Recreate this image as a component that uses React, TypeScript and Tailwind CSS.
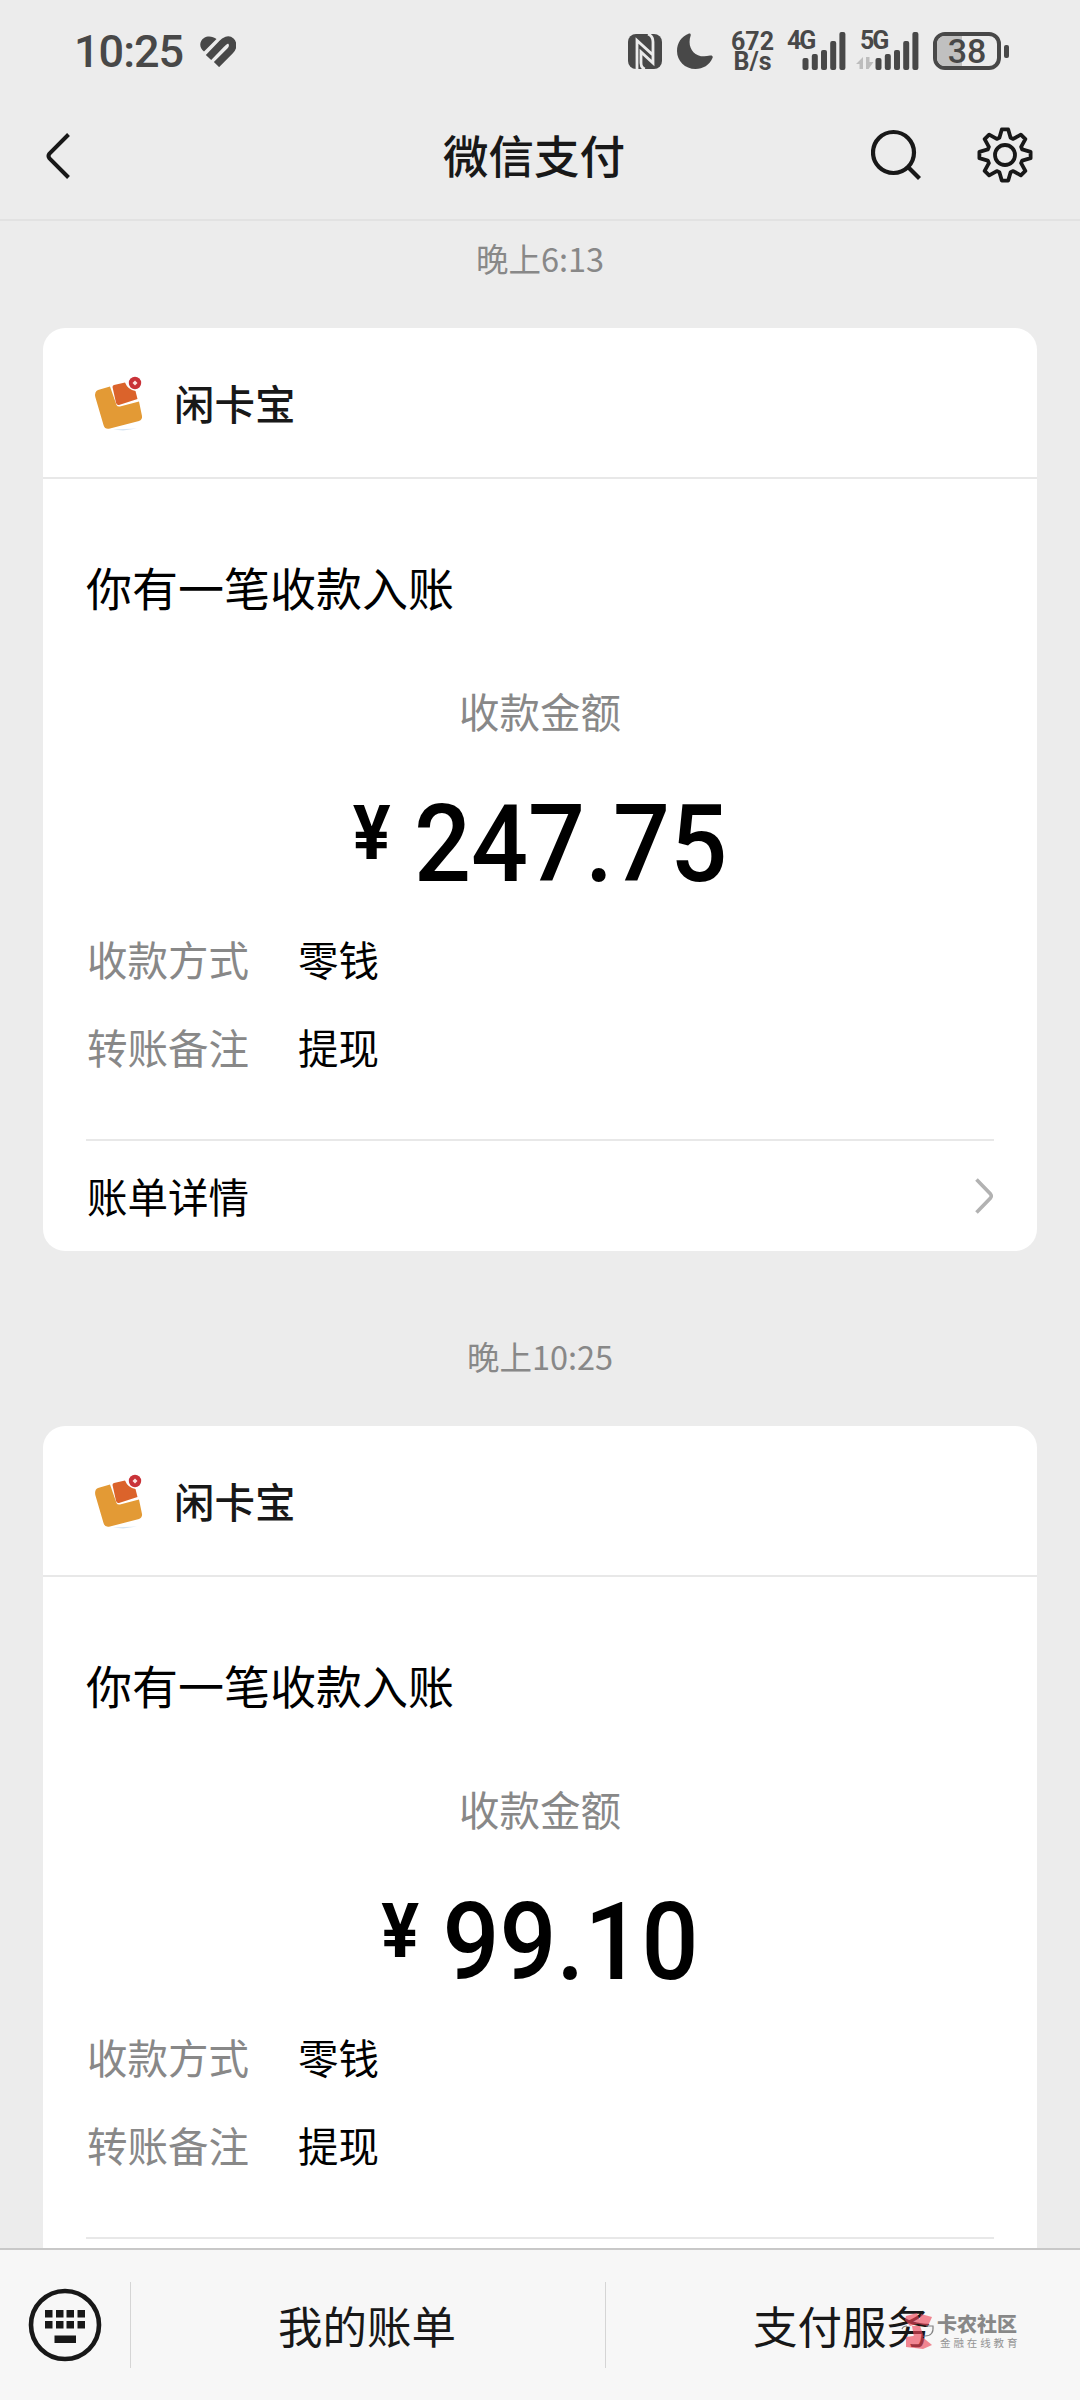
import { FC } from 'react';

interface Payment {
  time: string;
  amount: string;
}

const payments: Payment[] = [
  { time: '晚上6:13', amount: '247.75' },
  { time: '晚上10:25', amount: '99.10' },
];

const details = [
  { label: '收款方式', value: '零钱' },
  { label: '转账备注', value: '提现' },
];

// one tooth (base, tip, tip, base), repeated eight times around the centre
const TOOTH = [
  [-5.6, -17.2],
  [-3.2, -25.6],
  [3.2, -25.6],
  [5.6, -17.2],
];

const gearPoints = Array.from({ length: 8 }, (_, i) => {
  const a = (i * Math.PI) / 4;
  return TOOTH.map(([x, y]) => {
    const px = 28 + x * Math.cos(a) - y * Math.sin(a);
    const py = 28 + x * Math.sin(a) + y * Math.cos(a);
    return `${px.toFixed(2)},${py.toFixed(2)}`;
  }).join(' ');
}).join(' ');

const Signal: FC<{ label: string; data?: boolean }> = ({ label, data }) => (
  <div className="relative h-[38px] w-[62px]">
    <span className="absolute left-0 top-[-2px] text-[25px] font-bold leading-[22px] tracking-[-2px]">{label}</span>
    <svg viewBox="0 0 62 38" className="absolute inset-0 h-full w-full overflow-visible">
      <g fill="#484848">
        <rect x="15.5" y="26" width="6" height="12" rx="2" />
        <rect x="24.8" y="22" width="6" height="16" rx="2" />
        <rect x="34" y="18" width="6" height="20" rx="2" />
        <rect x="43.2" y="9" width="6" height="29" rx="2" />
        <rect x="52.4" y="0" width="6" height="38" rx="2" />
      </g>
      {data && <path d="M-4 32L3 25V37H-.5V32ZM6 25H9.5V30H13.5L8.5 37H6Z" fill="#bdbdbd" />}
    </svg>
  </div>
);

const StatusBar: FC = () => (
  <div className="flex h-[100px] items-center pl-[74px] pr-[71px] pt-[2px] font-['Roboto','Noto_Sans_CJK_SC',sans-serif] text-[#484848]">
    <span className="w-[126px] text-[45px] font-medium leading-none tracking-[-1px]">10:25</span>
    <svg viewBox="0 0 36 31" className="h-[31px] w-[36px]">
      <path d="M4 15.5C-1 12 -1 5 4 2C8 -.5 13 .5 16.5 3Z" fill="#484848" />
      <path d="M8.5 21.5L21.5 8C25 4 28.5 2.8 31 5.2C33.8 8.5 33 12 30 15L16.5 28.5" fill="none" stroke="#484848" strokeWidth="7.4" />
    </svg>
    <div className="ml-auto flex items-center">
      <svg viewBox="0 0 34 35" className="mr-[15px] h-[35px] w-[34px]">
        <rect width="34" height="35" rx="8" fill="#484848" />
        <path d="M9 35V6.5L25 21V8Q25 2 20 0M25 20V29L13 18V29Q13 34 17 35" fill="none" stroke="#ececec" strokeWidth="2.8" />
      </svg>
      <svg viewBox="0 0 36 36" className="mr-[18px] h-[36px] w-[36px]" fill="#484848">
        <path d="M11.5 .8C13 .2 14.2 1.2 13.6 2.8C9.5 15 18 26.5 33 22.5C35 22 36.3 23.2 35.5 25C32.5 32 26 36 18.5 36C8 36 0 28 0 18C0 10 4.500 3.5 11.5 .8Z" />
      </svg>
      <div className="mr-[13px] flex w-[43px] flex-col items-center pt-[1px] text-[25px] font-bold leading-[20px]">
        <span>672</span>
        <span>B/s</span>
      </div>
      <div className="mr-[11px]">
        <Signal label="4G" />
      </div>
      <div className="mr-[11px]">
        <Signal label="5G" data />
      </div>
      <div className="flex items-center">
        <div className="relative flex h-[38px] w-[68px] items-center justify-center overflow-hidden rounded-[12px] border-4 border-[#484848]">
          <div className="absolute inset-y-0 left-0 w-[25px] bg-[#c0c0c0]" />
          <span className="relative text-[34px] font-medium leading-[30px]">38</span>
        </div>
        <div className="ml-[3px] h-[13px] w-[5px] rounded-[2px] bg-[#484848]" />
      </div>
    </div>
  </div>
);

const NavBar: FC = () => (
  <header className="grid h-[121px] grid-cols-3 items-start border-b-2 border-[#e2e2e2] px-[43px] text-[#181818]">
    <svg viewBox="0 0 30 50" className="mt-[31px] h-[50px] w-[30px]" fill="none" stroke="#181818" strokeWidth="4">
      <path d="M25.5 3.5L6.5 22.5Q4.5 25 6.5 27.5L25.5 46.5" />
    </svg>
    <h1 className="mt-[24px] -translate-x-[6px] text-center text-[45.5px] font-medium leading-[60px]">微信支付</h1>
    <div className="flex items-start justify-end pr-[4px]">
      <svg viewBox="0 0 52 52" className="mr-[54px] mt-[29px] h-[52px] w-[52px]" fill="none" stroke="#181818" strokeWidth="4.2">
        <circle cx="22.5" cy="23.5" r="20.5" />
        <path d="M37 38L48.5 49.5" />
      </svg>
      <svg viewBox="0 0 56 56" className="mt-[27px] h-[56px] w-[56px]" fill="none" stroke="#181818" strokeWidth="3.8">
        <polygon points={gearPoints} strokeLinejoin="round" />
        <circle cx="28" cy="28" r="10" />
      </svg>
    </div>
  </header>
);

const MerchantLogo: FC = () => (
  <svg viewBox="0 0 52 58" className="h-[58px] w-[52px]">
    <path d="M20 55.5L44 54.5L30 56.5Z" fill="#d5e4f2" />
    <path
      d="M5 16L17 12.5L23.5 31Q24.5 33 27 32.5L46 27.5L49 42Q49.5 45.5 46 47L17 54.5Q12 56 10.5 51L2.3 23Q1.3 17.5 5 16Z"
      fill="#e39a35"
    />
    <path d="M19.5 13Q19.5 11.5 21 11L32 8.5Q35 16 42.5 17L44.5 25L26 31Q24 31.5 23 29Z" fill="#db632b" />
    <circle cx="42" cy="9" r="6.2" fill="#c93238" />
    <path d="M42 6.5L44.5 9L42 11.5L39.5 9Z" fill="#fbe3df" />
  </svg>
);

const PaymentCard: FC<{ amount: string }> = ({ amount }) => (
  <article className="mx-[43px] h-[923px] shrink-0 overflow-hidden rounded-[22px] bg-white text-[40.5px] leading-[60px] text-black">
    <div className="flex h-[151px] items-center border-b-2 border-[#e8e8e8] pl-[50px]">
      <MerchantLogo />
      <span className="ml-[29px] font-medium text-[#181818]">闲卡宝</span>
    </div>
    <div className="px-[43px]">
      <p className="pt-[74px] text-[46px] leading-[66px]">你有一笔收款入账</p>
      <p className="mt-[62px] text-center text-[#888888]">收款金额</p>
      <div className="mt-[46px] flex h-[110px] scale-x-93 items-start justify-center font-['Roboto','Noto_Sans_CJK_SC',sans-serif] font-medium">
        <span className="mr-[25px] mt-[11px] text-[76px] font-bold leading-[70px]">¥</span>
        <span className="text-[108px] leading-[114px]">{amount}</span>
      </div>
      <dl className="mt-[32px] flex flex-col gap-[28px] pl-px">
        {details.map((row) => (
          <div key={row.label} className="flex">
            <dt className="w-[211px] text-[#888888]">{row.label}</dt>
            <dd>{row.value}</dd>
          </div>
        ))}
      </dl>
      <div className="mt-[62px] flex h-[112px] items-center justify-between border-t-2 border-[#e8e8e8]">
        <span className="pl-px">账单详情</span>
        <svg viewBox="0 0 20 38" className="h-[38px] w-[20px]" fill="none" stroke="#b2b2b2" strokeWidth="3.6">
          <path d="M2.5 2.5L16.5 17Q18 19 16.5 21L2.5 35.5" />
        </svg>
      </div>
    </div>
  </article>
);

const Watermark: FC = () => (
  <div className="absolute left-[901px] top-[62px] flex items-start opacity-90">
    <svg viewBox="0 0 34 38" className="h-[38px] w-[34px]">
      <g fill="#ef4557" opacity=".7">
        <path d="M5 4L16 1L20 11L9 14L4 8Z" />
        <path d="M20 2L31 5L27 14L17 12Z" />
        <path d="M11 14L19 14L23 25L13 25Z" />
        <path d="M5 25L19 23L31 33L22 37L5 35Z" />
      </g>
      <path d="M1 17Q2 14 6 14M25 14H32Q33 24 24 24" fill="none" stroke="#777777" strokeWidth="1.2" />
    </svg>
    <div className="ml-[2px] flex flex-col">
      <span className="text-[20px] font-black leading-[24px] text-[#7d7d7d]">卡农社区</span>
      <span className="ml-[3px] text-[10.5px] leading-[14px] tracking-[2.9px] text-[#8a8a8a]">金融在线教育</span>
    </div>
  </div>
);

const BottomBar: FC = () => (
  <footer className="relative flex h-[152px] shrink-0 items-center border-t-2 border-[#c8c8c8] bg-[#f7f7f7] text-[44.5px] text-[#181818]">
    <div className="flex h-[86px] w-[131px] items-center border-r border-[#d5d5d5] pl-[28px]">
      <svg viewBox="0 0 74 74" className="h-[74px] w-[74px]">
        <circle cx="37" cy="37" r="34" fill="none" stroke="#181818" strokeWidth="4.6" />
        <g fill="#181818">
          {[17, 28, 38.5, 49.5].map((x) => (
            <g key={x}>
              <rect x={x} y="22" width="7.5" height="7.5" />
              <rect x={x} y="33" width="7.5" height="7.5" />
            </g>
          ))}
          <rect x="26.5" y="47.5" width="21.5" height="7.5" />
        </g>
      </svg>
    </div>
    <div className="flex h-[86px] flex-1 items-center justify-center border-r border-[#d5d5d5] pr-[2px]">我的账单</div>
    <div className="flex h-[86px] flex-1 items-center justify-center pr-[2px]">支付服务</div>
    <Watermark />
  </footer>
);

const App: FC = () => {
  return (
    <div className="flex h-[2400px] w-[1080px] flex-col overflow-hidden bg-[#ececec] font-['Noto_Sans_CJK_SC',sans-serif]">
      <StatusBar />
      <NavBar />
      <main className="flex min-h-0 flex-1 flex-col overflow-hidden pt-[17px]">
        {payments.map((payment) => (
          <section key={payment.time} className="mb-[85px] shrink-0">
            <p className="mb-[50px] text-center text-[32.5px] leading-[40px] text-[#888888]">{payment.time}</p>
            <PaymentCard amount={payment.amount} />
          </section>
        ))}
      </main>
      <BottomBar />
    </div>
  );
};

export default App;
